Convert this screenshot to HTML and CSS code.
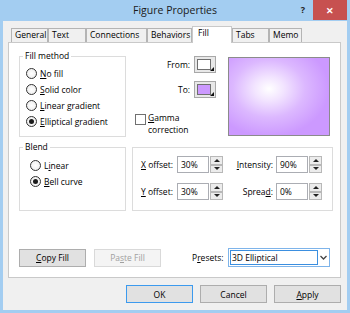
FILE: index.html
```html
<!DOCTYPE html>
<html>
<head>
<meta charset="utf-8">
<link rel="stylesheet" href="styles.css">
</head>
<body>
<div class="window">
  <div class="titlebar">
    <span></span>
    <span class="title">Figure Properties</span>
    <span class="caption-btns"><span class="help">?</span><span class="close">&#x2715;</span></span>
  </div>
  <div class="client">
    <div class="tabs">
      <div class="tab t-general">General</div>
      <div class="tab t-text">Text</div>
      <div class="tab t-conn">Connections</div>
      <div class="tab t-beh">Behaviors</div>
      <div class="tab t-fill active">Fill</div>
      <div class="tab t-tabs">Tabs</div>
      <div class="tab t-memo">Memo</div>
    </div>
    <div class="panel">
      <div class="row-top">
        <fieldset class="group fill-method">
          <legend>Fill method</legend>
          <div class="radio-list">
            <div class="radio"><span class="circle"></span><span><u>N</u>o fill</span></div>
            <div class="radio"><span class="circle"></span><span><u>S</u>olid color</span></div>
            <div class="radio"><span class="circle"></span><span><u>L</u>inear gradient</span></div>
            <div class="radio"><span class="circle on"></span><span><u>E</u>lliptical gradient</span></div>
          </div>
        </fieldset>
        <div class="colors">
          <div class="color-row"><span class="lbl">From:</span><span class="swatch"><span class="chip chip-white"></span><span class="corner"></span></span></div>
          <div class="color-row to"><span class="lbl">To:</span><span class="swatch"><span class="chip chip-purple"></span><span class="corner"></span></span></div>
          <div class="gamma"><span class="check"></span><span class="gamma-text"><u>G</u>amma<br>correction</span></div>
        </div>
        <div class="preview"></div>
      </div>
      <div class="row-mid">
        <fieldset class="group blend">
          <legend>Blend</legend>
          <div class="radio-list">
            <div class="radio"><span class="circle"></span><span>L<u>i</u>near</span></div>
            <div class="radio"><span class="circle on"></span><span><u>B</u>ell curve</span></div>
          </div>
        </fieldset>
        <div class="group offsets">
          <span class="olbl"><u>X</u> offset:</span>
          <span class="field">30%</span>
          <span class="spin"><span class="sb up"></span><span class="sb down"></span></span>
          <span class="olbl right"><u>I</u>ntensity:</span>
          <span class="field">90%</span>
          <span class="spin"><span class="sb up"></span><span class="sb down"></span></span>
          <span class="olbl"><u>Y</u> offset:</span>
          <span class="field">30%</span>
          <span class="spin"><span class="sb up"></span><span class="sb down"></span></span>
          <span class="olbl right">Sprea<u>d</u>:</span>
          <span class="field">0%</span>
          <span class="spin"><span class="sb up"></span><span class="sb down"></span></span>
        </div>
      </div>
      <div class="row-bottom">
        <span class="btn"><u>C</u>opy Fill</span>
        <span class="btn disabled">Pa<u>s</u>te Fill</span>
        <span class="presets-lbl">P<u>r</u>esets:</span>
        <span class="combo"><span class="combo-text">3D Elliptical</span><span class="combo-arrow"><svg width="7" height="5" viewBox="0 0 7 5"><path d="M0.5 1 L3.5 4 L6.5 1" fill="none" stroke="#444" stroke-width="1.3"/></svg></span></span>
      </div>
    </div>
    <div class="dialog-buttons">
      <span class="btn default">OK</span>
      <span class="btn">Cancel</span>
      <span class="btn"><u>A</u>pply</span>
    </div>
  </div>
</div>
</body>
</html>
```

FILE: styles.css
```css
* { box-sizing: border-box; }
html, body { margin: 0; padding: 0; }
body {
  width: 350px;
  height: 313px;
  overflow: hidden;
  font-family: "Open Sans", "Noto Sans", sans-serif;
  font-size: 8.5px;
  color: #000;
}
u { text-decoration: underline; text-underline-offset: 1px; }

.window {
  width: 350px;
  height: 313px;
  background: #a3cdf1;
  display: flex;
  flex-direction: column;
}

.titlebar {
  height: 21px;
  display: grid;
  grid-template-columns: 1fr auto 1fr;
  align-items: start;
}
.title {
  font-size: 10.5px;
  line-height: 21px;
  color: #1a1a1a;
  padding-top: 0;
}
.caption-btns {
  display: flex;
  justify-content: flex-end;
  align-items: flex-start;
}
.help {
  font-weight: bold;
  font-size: 9px;
  line-height: 20px;
  margin-right: 8px;
  color: #222;
}
.close {
  width: 34px;
  height: 20px;
  margin-right: 3px;
  background: #c75150;
  color: #fff;
  font-size: 9px;
  font-weight: bold;
  display: flex;
  align-items: center;
  justify-content: center;
}

.client {
  flex: 1;
  margin: 0 3px 3px 3px;
  background: #f0f0f0;
  padding: 0 6px 0 5px;
  display: flex;
  flex-direction: column;
}

.tabs {
  display: flex;
  align-items: flex-end;
  height: 21px;
  padding-top: 6px;
  padding-left: 3px;
}
.tab {
  height: 14px;
  border: 1px solid #b4b4b4;
  border-bottom: none;
  background: #f0f0f0;
  padding-left: 3px;
  line-height: 12px;
  margin-bottom: 0;
}
.tab.active {
  height: 17px;
  background: #fff;
  margin-bottom: -1px;
  position: relative;
  z-index: 1;
  border-color: #c9c9c9;
  padding-left: 5px;
  line-height: 11px;
}
.t-general { width: 37px; }
.t-text { width: 38px; }
.t-conn { width: 61px; }
.t-beh { width: 45px; }
.t-fill { width: 40px; }
.t-tabs { width: 37px; }
.t-memo { width: 33px; }

.panel {
  height: 236px;
  background: #fff;
  border: 1px solid #c9c9c9;
  display: flex;
  flex-direction: column;
  padding: 7px 0 10px 10px;
}

.group {
  border: 1px solid #dcdcdc;
  margin: 0;
  padding: 0;
  min-width: 0;
}
legend {
  padding: 0 2px;
  margin-left: 3px;
  line-height: 12px;
}

.row-top {
  display: flex;
  align-items: flex-start;
}
.fill-method {
  width: 107px;
  height: 87px;
}
.radio-list {
  padding: 3px 0 0 6px;
}
.radio {
  height: 16px;
  display: flex;
  align-items: center;
}
.circle {
  width: 11px;
  height: 11px;
  border-radius: 50%;
  border: 1px solid #333;
  background: radial-gradient(circle at 50% 50%, #fff 0%, #f2f2f2 60%, #dcdcdc 100%);
  margin-right: 3px;
  flex: none;
  display: flex;
  align-items: center;
  justify-content: center;
}
.circle.on::after {
  content: "";
  width: 5px;
  height: 5px;
  border-radius: 50%;
  background: #1b1b1b;
}

.colors {
  width: 84px;
  margin-left: 6px;
  margin-top: 6px;
  display: flex;
  flex-direction: column;
}
.color-row {
  display: flex;
  align-items: center;
  justify-content: flex-end;
  height: 17px;
}
.color-row.to { margin-top: 8px; }
.lbl { margin-right: 4px; }
.swatch {
  width: 22px;
  height: 17px;
  border: 1px solid #a8a8a8;
  background: #e8e8e8;
  padding: 2px;
  display: flex;
  position: relative;
}
.chip {
  width: 14px;
  height: 11px;
  border: 1px solid #707070;
}
.chip-white { background: #fff; }
.chip-purple { background: #cc99ff; }
.corner {
  position: absolute;
  right: 1px;
  bottom: 1px;
  width: 0;
  height: 0;
  border-left: 4px solid transparent;
  border-bottom: 4px solid #111;
}
.gamma {
  display: flex;
  align-items: flex-start;
  margin-top: 14px;
  margin-left: 3px;
}
.check {
  width: 11px;
  height: 11px;
  border: 1px solid #707070;
  background: #fff;
  margin-top: 2px;
  margin-right: 2px;
  flex: none;
}
.gamma-text { line-height: 12px; }

.preview {
  width: 102px;
  height: 79px;
  margin-left: 12px;
  margin-top: 7px;
  border: 1px solid #8b8b8b;
  background: radial-gradient(ellipse 60% 62% at 40% 40%, #ffffff 0%, #f2e4ff 25%, #dcb8ff 60%, #cc99ff 100%);
}

.row-mid {
  display: flex;
  align-items: flex-start;
  margin-top: 4px;
}
.blend {
  width: 107px;
  height: 70px;
}
.blend .radio-list { padding: 4px 0 0 10px; }

.offsets {
  width: 201px;
  height: 64px;
  margin-left: 6px;
  margin-top: 6px;
  display: grid;
  grid-template-columns: 36px 32px 14px 53px 32px 14px;
  grid-template-rows: 17px 17px;
  row-gap: 10px;
  padding: 8px 0 0 8px;
  align-items: center;
}
.olbl { white-space: nowrap; }
.olbl.right { text-align: right; padding-right: 3px; }
.field {
  height: 17px;
  border: 1px solid #abadb3;
  background: #fff;
  padding-left: 3px;
  line-height: 15px;
}
.spin {
  height: 17px;
  display: flex;
  flex-direction: column;
  padding-left: 1px;
}
.sb {
  flex: 1;
  border: 1px solid #b8b8b8;
  background: #ececec;
  display: flex;
  align-items: center;
  justify-content: center;
}
.sb.up::after {
  content: "";
  border-left: 3px solid transparent;
  border-right: 3px solid transparent;
  border-bottom: 3px solid #222;
}
.sb.down::after {
  content: "";
  border-left: 3px solid transparent;
  border-right: 3px solid transparent;
  border-top: 3px solid #222;
}

.row-bottom {
  margin-top: auto;
  display: flex;
  align-items: center;
  height: 19px;
}
.btn {
  width: 67px;
  height: 18px;
  border: 1px solid #adadad;
  background: #e1e1e1;
  display: flex;
  align-items: center;
  justify-content: center;
  flex: none;
}
.btn.disabled {
  background: #f4f4f4;
  border-color: #d9d9d9;
  color: #a0a0a0;
  margin-left: 8px;
}
.presets-lbl {
  margin-left: 31px;
  width: 36px;
}
.combo {
  width: 102px;
  height: 19px;
  border: 1px solid #7eb4ea;
  background: #fff;
  display: flex;
  align-items: center;
  padding: 1px;
}
.combo-text {
  width: 88px;
  height: 15px;
  border: 1px solid #3b8fe0;
  line-height: 13px;
  padding-left: 1px;
}
.combo-arrow {
  flex: 1;
  display: flex;
  justify-content: center;
  align-items: center;
}

.dialog-buttons {
  display: flex;
  justify-content: flex-end;
  gap: 7px;
  margin-top: 7px;
  padding-right: 0;
}
.dialog-buttons .btn.default {
  border-color: #3c9aee;
}
```
